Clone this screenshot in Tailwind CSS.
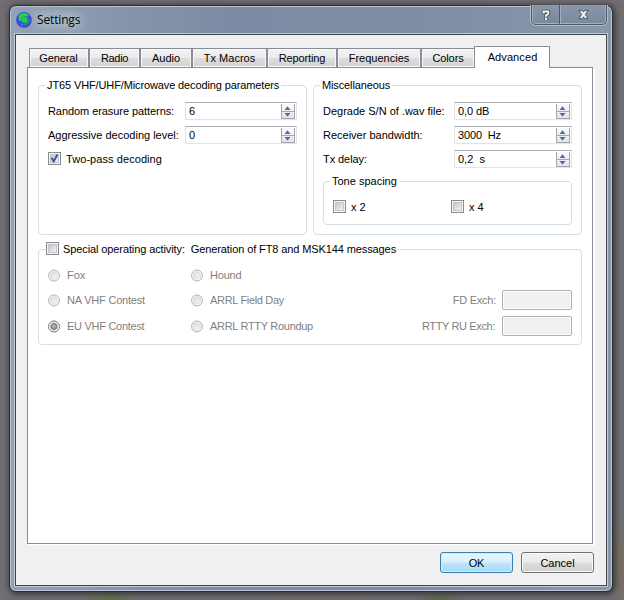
<!DOCTYPE html>
<html lang="en">
<head>
<meta charset="utf-8">
<title>Settings</title>
<script src="https://cdn.jsdelivr.net/npm/@tailwindcss/browser@4"></script>
</head>
<body class="w-[624px] h-[600px] overflow-hidden bg-[#706e72] text-[11px] leading-[14px] text-black" style="font-family:'Liberation Sans',Arial,sans-serif">
<svg width="0" height="0" class="absolute">
  <defs>
    <linearGradient id="spin" x1="0" y1="0" x2="0" y2="1"><stop offset="0" stop-color="#fafafa"/><stop offset="1" stop-color="#e4e4e4"/></linearGradient>
    <linearGradient id="box" x1="0" y1="0" x2="1" y2="1"><stop offset="0" stop-color="#bcc2cc"/><stop offset="1" stop-color="#f8f8f8"/></linearGradient>
    <radialGradient id="rad" cx=".6" cy=".65" r=".6"><stop offset="0" stop-color="#f0f0f0"/><stop offset="1" stop-color="#dedede"/></radialGradient>
    <symbol id="spinner" viewBox="0 0 14 15">
      <rect x="0" y="0" width="14" height="15" fill="url(#spin)"/>
      <path d="M.5 0V14.5M13.500 0V14.500M0 7.500H14M0 14.500H14" stroke="#a5a5aa" fill="none"/>
      <path d="M3.500 6L6.500 2.200 9.500 6zM3.500 9H9.500L6.500 12.800z" fill="#5069b8"/>
    </symbol>
    <symbol id="check" viewBox="0 0 13 13">
      <rect x=".5" y=".5" width="12" height="12" fill="#f4f4f4" stroke="#8a8b8c"/>
      <rect x="2.500" y="2.500" width="8" height="8" fill="url(#box)" stroke="#c4c7cc"/>
    </symbol>
    <symbol id="radio" viewBox="0 0 13 13">
      <circle cx="6" cy="6.500" r="5.500" fill="#f5f5f5" stroke="#b4b4b4"/>
      <circle cx="6" cy="6.500" r="4.300" fill="url(#rad)"/>
    </symbol>
  </defs>
</svg>
<div class="flex flex-col w-full h-full pl-[9px] pr-[11px] pt-[5px] pb-[8px] bg-[radial-gradient(ellipse_30px_10px_at_110px_600px,#64704c,transparent),radial-gradient(ellipse_30px_9px_at_440px_600px,#5d694d,transparent),radial-gradient(ellipse_60px_7px_at_320px_600px,#746d66,transparent),radial-gradient(ellipse_14px_50px_at_624px_565px,#77705f,transparent)]">
 <div class="relative flex flex-col flex-1 rounded-[7px] border border-[#2b2d34] bg-[#7e8ea3] bg-[linear-gradient(90deg,#94a2b5_0,#8495ab_120px,#7a8ba3_220px,#7e8ea4_430px,#8a97a9_100%)] shadow-[1px_1px_6px_1px_rgba(0,0,0,0.55),inset_0_0_0_1px_#bac5d2]">
  <header class="flex items-start h-[28px] pl-[6px]">
    <svg class="mt-[6px] shrink-0" width="16" height="16" viewBox="0 0 16 16"><circle cx="8" cy="8" r="7.900" fill="#3448e4"/><path d="M4 2C6.500 .8 9 .6 11 1.500L12.500 3.500 11.500 5 9.500 4 6.500 4 5 7 4 10 3 8.500 2.500 5z" fill="#27d83a"/><path d="M6.500 4L9.500 4.500 11.500 6.500 11 9.500 9 11 6.500 10.500 4.800 8z" fill="#22cc48"/><path d="M12 6L13.500 8 12.500 11 10.500 12.500 9.500 14.500 8 12.500 10.500 10.500 12 8z" fill="#1ea45e"/><path d="M4 11L6.500 11.800 7.500 14.500 5 13.500z" fill="#4d76e6"/></svg>
    <h1 class="ml-[5px] mt-[5px] text-[12px] leading-[17px] tracking-[-0.15px] [text-shadow:0_0_8px_#c5cedb,0_0_10px_#c5cedb,0_0_14px_#c5cedb,0_0_14px_#c5cedb]" style="font-family:'Open Sans','Noto Sans',sans-serif">Settings</h1>
    <div class="ml-auto mr-[5px] flex h-[20px] w-[76px] -mt-px rounded-b-[5px] border border-t-0 border-[#4f5968] bg-[linear-gradient(#8a97aa,#8190a5_50%,#7888a0)] shadow-[0_1px_0_#b3bdca,1px_0_0_#b3bdca,-1px_0_0_#b3bdca,inset_0_-1px_0_#a3afbe,inset_1px_0_0_#a3afbe,inset_-1px_0_0_#a3afbe]">
      <div class="flex items-center justify-center w-[28px] border-r border-[#4f5968]">
        <svg width="10" height="12" viewBox="0 0 10 12" fill="none"><path d="M2.500 4.600V2.500H7.500V5L5 6.500V8M5 9V11" stroke="#454b5a" stroke-width="3.600" stroke-linejoin="round"/><path d="M2.500 4.200V2.500H7.300V5L5 6.300V7.700M5 9V11" stroke="#f7f8fa" stroke-width="1.900" stroke-linejoin="round"/></svg>
      </div>
      <div class="flex flex-1 items-center justify-center border-l border-[#a3afbe]">
        <svg width="13" height="11" viewBox="0 0 13 12" fill="none"><path d="M1.500 1.500H5L6.500 3.500 8 1.500H11.500L8.500 6 11.500 10.500H8L6.500 8.500 5 10.500H1.500L4.500 6z" fill="#f4f5f7" stroke="#454b59"/></svg>
      </div>
    </div>
  </header>
  <main class="flex flex-col flex-1 mx-[5px] mb-[5px] border border-[#42464f] bg-[#f0f0f0] shadow-[0_0_0_1px_#bfc9d5] pl-[11px] pr-[13px] pt-[11px]">
    <nav class="flex items-end pl-[2px] h-[22px] relative z-10 -mb-px text-center">
      <div class="flex w-[60px] h-[20px] items-center justify-center border border-[#898c95] bg-[linear-gradient(#f3f3f3,#ebebeb_50%,#dddddd_51%,#d2d2d2)] shadow-[inset_0_0_0_1px_#f8f8f8] tracking-[-0.1px] pr-px">General</div>
      <div class="flex w-[51px] h-[20px] items-center justify-center border border-[#898c95] bg-[linear-gradient(#f3f3f3,#ebebeb_50%,#dddddd_51%,#d2d2d2)] shadow-[inset_0_0_0_1px_#f8f8f8] tracking-[-0.3px]">Radio</div>
      <div class="flex w-[52px] h-[20px] items-center justify-center border border-[#898c95] bg-[linear-gradient(#f3f3f3,#ebebeb_50%,#dddddd_51%,#d2d2d2)] shadow-[inset_0_0_0_1px_#f8f8f8]">Audio</div>
      <div class="flex w-[75px] h-[20px] items-center justify-center border border-[#898c95] bg-[linear-gradient(#f3f3f3,#ebebeb_50%,#dddddd_51%,#d2d2d2)] shadow-[inset_0_0_0_1px_#f8f8f8]">Tx Macros</div>
      <div class="flex w-[70px] h-[20px] items-center justify-center border border-[#898c95] bg-[linear-gradient(#f3f3f3,#ebebeb_50%,#dddddd_51%,#d2d2d2)] shadow-[inset_0_0_0_1px_#f8f8f8] tracking-[-0.15px]">Reporting</div>
      <div class="flex w-[84px] h-[20px] items-center justify-center border border-[#898c95] bg-[linear-gradient(#f3f3f3,#ebebeb_50%,#dddddd_51%,#d2d2d2)] shadow-[inset_0_0_0_1px_#f8f8f8]">Frequencies</div>
      <div class="flex w-[53px] h-[20px] items-center justify-center border border-r-0 border-[#898c95] bg-[linear-gradient(#f3f3f3,#ebebeb_50%,#dddddd_51%,#d2d2d2)] shadow-[inset_0_0_0_1px_#f8f8f8] tracking-[-0.1px]">Colors</div>
      <div class="flex w-[76px] h-[22px] pb-px pl-px items-center justify-center border border-b-0 border-[#898c95] bg-white tracking-[0.1px]">Advanced</div>
    </nav>
    <section class="h-[477px] border border-[#898c95] bg-white shadow-[1px_1px_0_#fff,2px_1px_0_#fff] pt-[10px] pl-[10px]">
      <div class="flex gap-[6px]">
        <fieldset class="w-[269px] h-[157px] border border-[#d5dfe5] rounded-[4px] pl-[9px] pr-[9px]">
          <legend class="-ml-[3px] px-[2px] tracking-[-0.12px] whitespace-nowrap">JT65 VHF/UHF/Microwave decoding parameters</legend>
          <div class="flex flex-col gap-[6px] pt-[10px]">
            <div class="flex items-center h-[18px]"><span class="w-[137px] tracking-[-0.07px]">Random erasure patterns:</span>
              <div class="flex w-[112px] h-[18px] items-center border border-[#e3e3e7] border-t-[#abadb3] pl-[3px] pr-px"><span>6</span><svg class="ml-auto" width="14" height="15"><use href="#spinner"/></svg></div></div>
            <div class="flex items-center h-[18px]"><span class="w-[137px]">Aggressive decoding level:</span>
              <div class="flex w-[112px] h-[18px] items-center border border-[#e3e3e7] border-t-[#abadb3] pl-[3px] pr-px"><span>0</span><svg class="ml-auto" width="14" height="15"><use href="#spinner"/></svg></div></div>
            <div class="flex items-center h-[18px] gap-[5px]"><svg class="-mt-px" width="13" height="13"><use href="#check"/><path d="M3.500 5.800L5.700 9.300 9.500 2.500" fill="none" stroke="#41579f" stroke-width="2"/></svg><span class="tracking-[0.07px]">Two-pass decoding</span></div>
          </div>
        </fieldset>
        <fieldset class="w-[269px] h-[157px] border border-[#d5dfe5] rounded-[4px] pl-[9px] pr-[9px]">
          <legend class="-ml-[3px] px-[2px] tracking-[-0.13px]">Miscellaneous</legend>
          <div class="flex flex-col gap-[6px] pt-[10px]">
            <div class="flex items-center h-[18px]"><span class="w-[131px]">Degrade S/N of .wav file:</span>
              <div class="flex w-[118px] h-[18px] items-center border border-[#e3e3e7] border-t-[#abadb3] pl-[3px] pr-px"><span class="tracking-[-0.1px]">0,0 dB</span><svg class="ml-auto" width="14" height="15"><use href="#spinner"/></svg></div></div>
            <div class="flex items-center h-[18px]"><span class="w-[131px]">Receiver bandwidth:</span>
              <div class="flex w-[118px] h-[18px] items-center border border-[#e3e3e7] border-t-[#abadb3] pl-[3px] pr-px"><span class="whitespace-pre tracking-[-0.15px]">3000  Hz</span><svg class="ml-auto" width="14" height="15"><use href="#spinner"/></svg></div></div>
            <div class="flex items-center h-[18px]"><span class="w-[131px] tracking-[-0.07px]">Tx delay:</span>
              <div class="flex w-[118px] h-[18px] items-center border border-[#e3e3e7] border-t-[#abadb3] pl-[3px] pr-px"><span class="whitespace-pre">0,2  s</span><svg class="ml-auto" width="14" height="15"><use href="#spinner"/></svg></div></div>
            <fieldset class="w-[249px] h-[51px] border border-[#d5dfe5] rounded-[4px] pl-[9px]">
              <legend class="-ml-[3px] px-[2px]">Tone spacing</legend>
              <div class="flex pt-[11px]">
                <div class="flex w-[118px] h-[15px] gap-[5px]"><svg class="mt-px" width="13" height="13"><use href="#check"/></svg><span class="pt-px">x 2</span></div>
                <div class="flex h-[15px] gap-[5px]"><svg class="mt-px" width="13" height="13"><use href="#check"/></svg><span class="pt-px">x 4</span></div>
              </div>
            </fieldset>
          </div>
        </fieldset>
      </div>
      <fieldset class="mt-[7px] w-[544px] h-[103px] border border-[#d5dfe5] rounded-[4px] pl-[9px] pr-[9px]">
        <legend class="-ml-[2px] pr-[2px] whitespace-nowrap"><span class="flex gap-[4px]"><svg width="13" height="13"><use href="#check"/></svg><span class="whitespace-pre tracking-[-0.105px]">Special operating activity:  Generation of FT8 and MSK144 messages</span></span></legend>
        <div class="grid grid-cols-[143px_1fr_auto] grid-rows-[26px_24px_28px] items-center pt-[6px] text-[#7f7f7f]">
          <div class="flex items-center gap-[6px]"><svg width="13" height="13"><use href="#radio"/></svg><span>Fox</span></div>
          <div class="flex items-center gap-[6px]"><svg width="13" height="13"><use href="#radio"/></svg><span class="tracking-[-0.2px]">Hound</span></div>
          <div></div>
          <div class="flex items-center gap-[6px]"><svg width="13" height="13"><use href="#radio"/></svg><span class="tracking-[-0.2px]">NA VHF Contest</span></div>
          <div class="flex items-center gap-[6px]"><svg width="13" height="13"><use href="#radio"/></svg><span class="tracking-[-0.32px]">ARRL Field Day</span></div>
          <div class="flex items-center justify-end gap-[6px]"><span class="tracking-[-0.25px]">FD Exch:</span><div class="w-[70px] h-[20px] rounded-[2px] border border-[#afafaf] bg-[#f0f0f0] shadow-[inset_0_0_0_1px_#fff]"></div></div>
          <div class="flex items-center gap-[6px]"><svg width="13" height="13"><use href="#radio"/><circle cx="6" cy="6.500" r="5.500" fill="none" stroke="#8e8e8e"/><circle cx="6" cy="6.500" r="3" fill="#9a9a9a" stroke="#747474"/><circle cx="5.500" cy="6" r="1.200" fill="#c2c2c2"/></svg><span class="tracking-[-0.28px]">EU VHF Contest</span></div>
          <div class="flex items-center gap-[6px]"><svg width="13" height="13"><use href="#radio"/></svg><span class="tracking-[-0.3px]">ARRL RTTY Roundup</span></div>
          <div class="flex items-center justify-end gap-[7px]"><span class="tracking-[-0.37px]">RTTY RU Exch:</span><div class="w-[70px] h-[20px] rounded-[2px] border border-[#afafaf] bg-[#f0f0f0] shadow-[inset_0_0_0_1px_#fff]"></div></div>
        </div>
      </fieldset>
    </section>
    <footer class="flex justify-end gap-[8px] pt-[8px] -mr-px">
      <button class="w-[73px] h-[21px] rounded-[3px] border border-[#3c7fb1] bg-[linear-gradient(#eaf6fd,#d9f0fc_48%,#bee6fd_52%,#a7d9f5)] shadow-[inset_0_0_0_1px_#c9effc] tracking-[-0.3px]">OK</button>
      <button class="w-[73px] h-[21px] rounded-[3px] border border-[#707070] bg-[linear-gradient(#f2f2f2,#ebebeb_48%,#dddddd_52%,#cfcfcf)] shadow-[inset_0_0_0_1px_#fafafa]">Cancel</button>
    </footer>
  </main>
 </div>
</div>
</body>
</html>
